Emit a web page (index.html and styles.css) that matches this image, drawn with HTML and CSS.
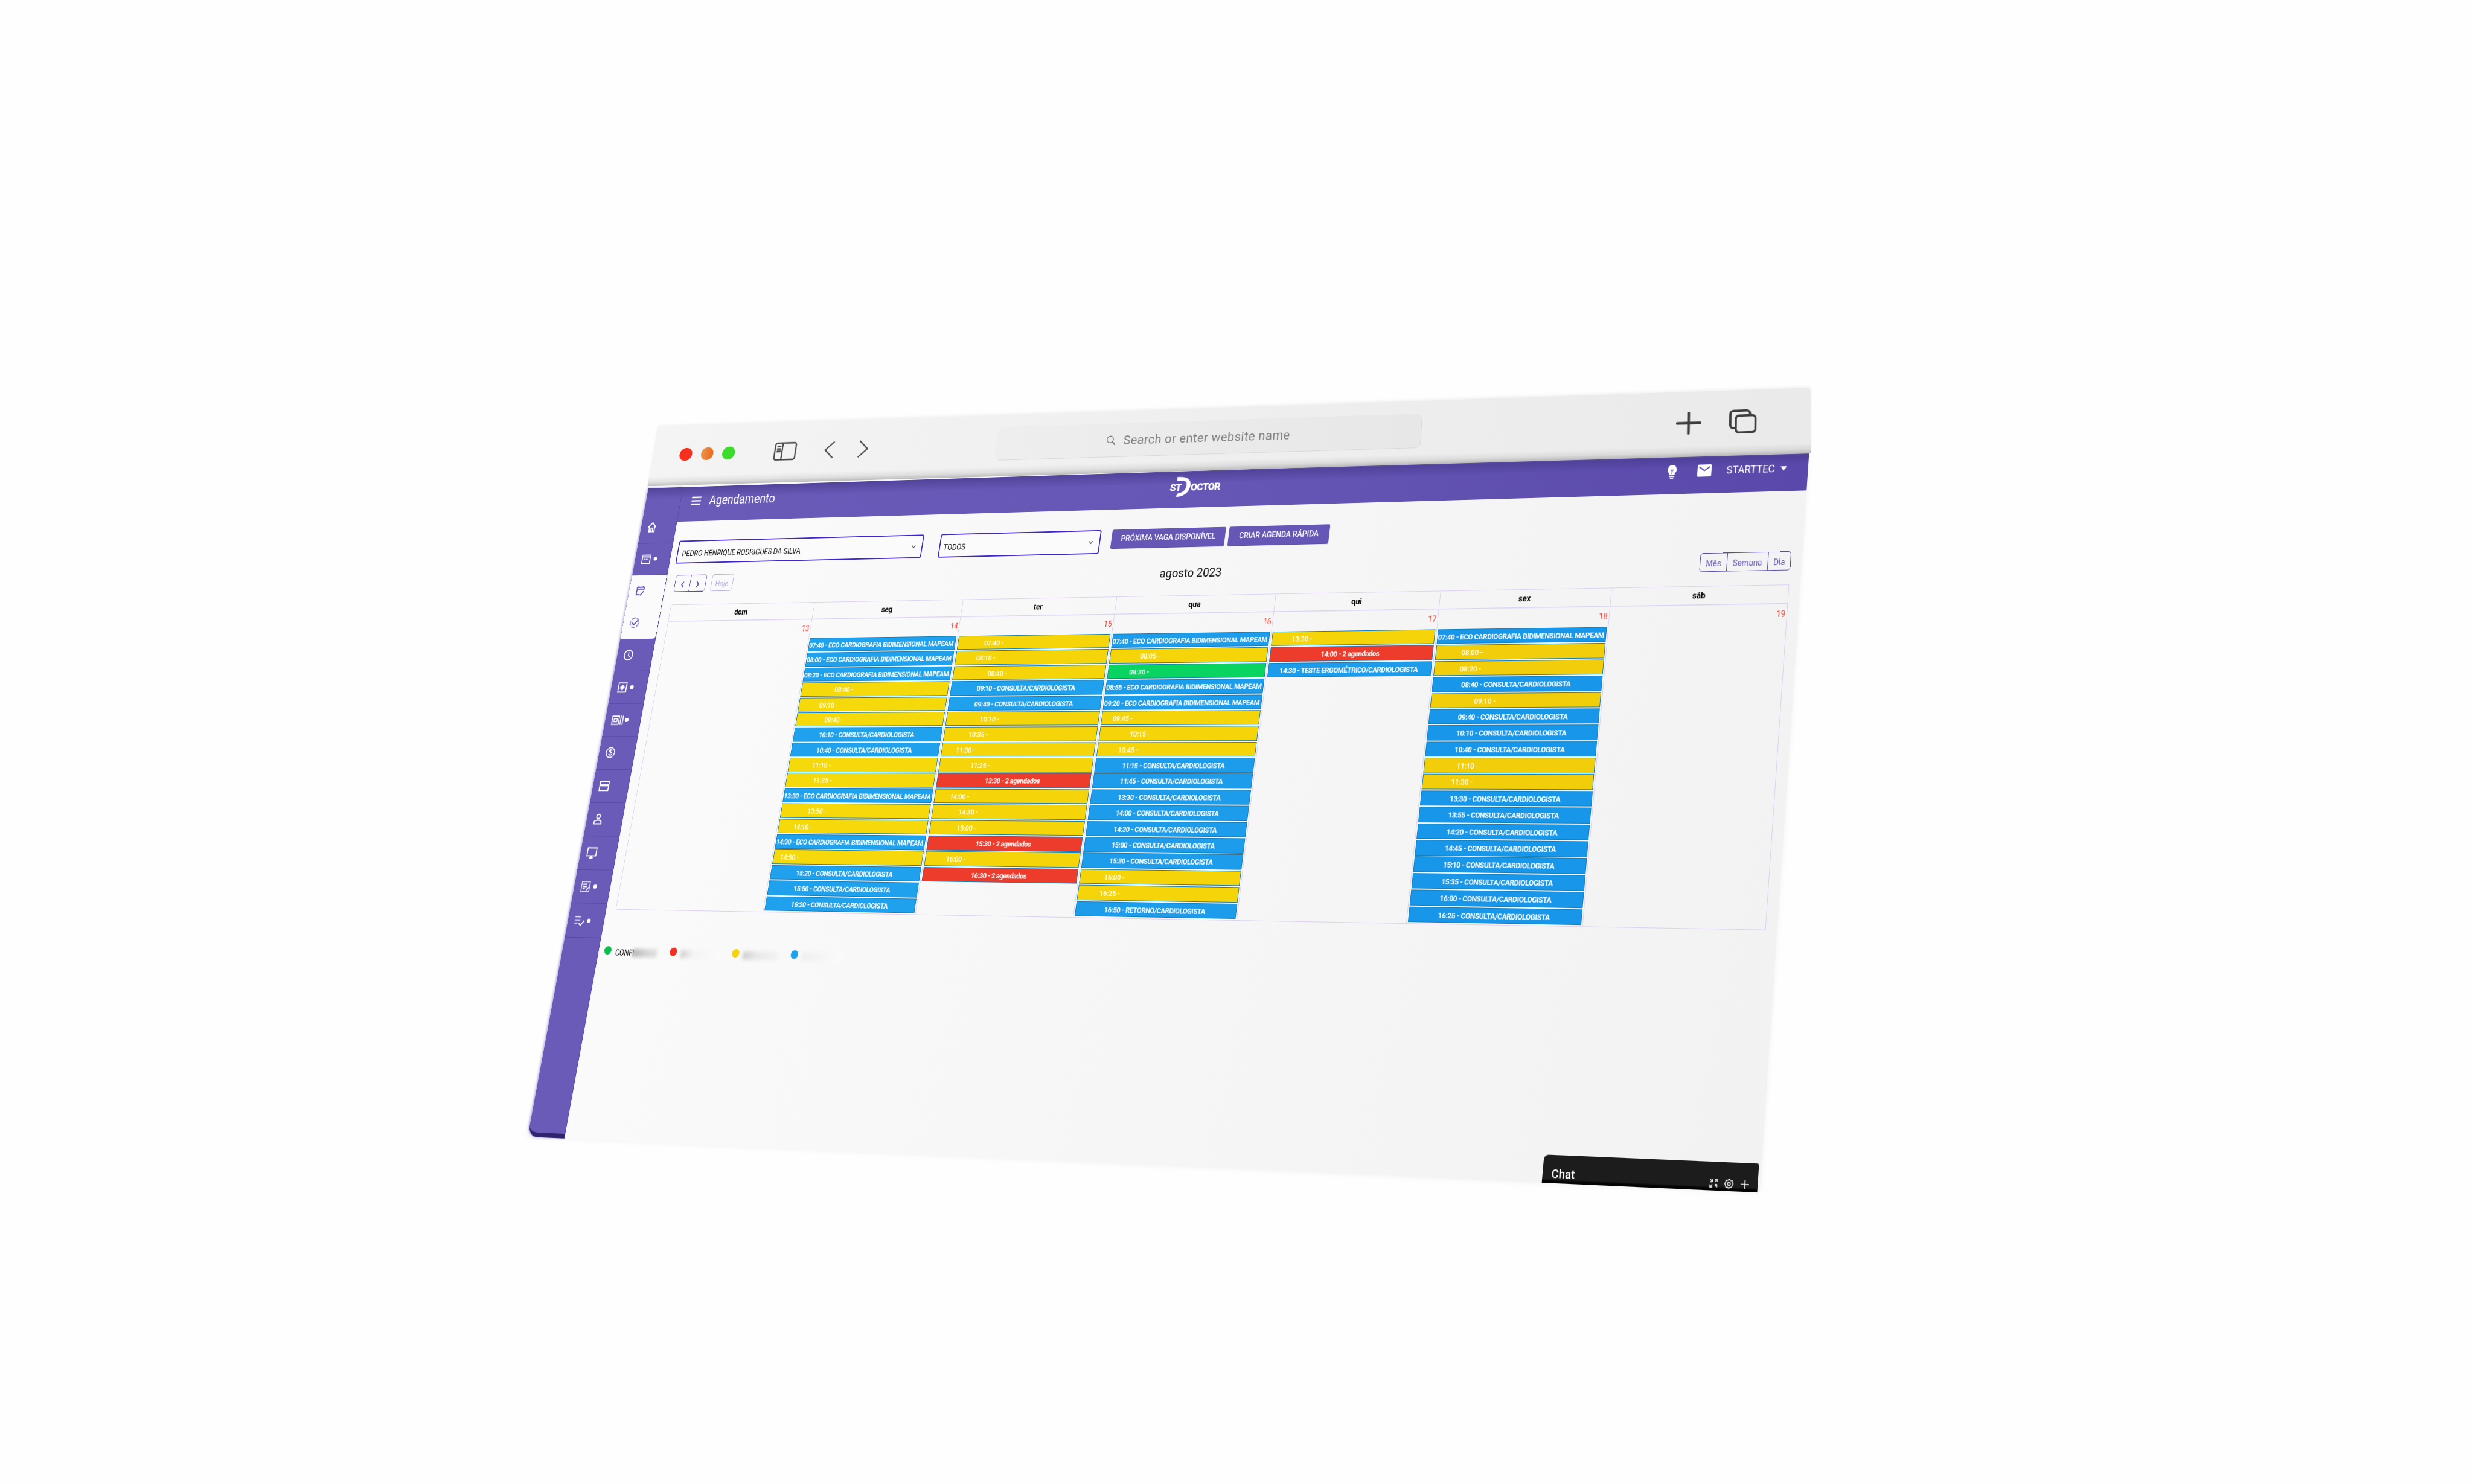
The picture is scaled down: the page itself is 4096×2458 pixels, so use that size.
FILE: index.html
```html
<!DOCTYPE html>
<html lang="pt-BR">
<head>
<meta charset="utf-8">
<title>Agendamento</title>
<link rel="stylesheet" href="styles.css">
</head>
<body>
<div class="stage">

<div class="app">
  <nav class="sidebar">
    <a class="item"><svg class="ic" viewBox="0 0 24 24"><path d="M3 12L12 3l9 9M6 10v11h4v-7h4v7h4V10" fill="none" stroke="#fff" stroke-width="2.4"/></svg></a>
    <a class="item dot"><svg class="ic" viewBox="0 0 24 24"><path d="M3 5h18v16H3z" fill="none" stroke="#fff" stroke-width="2.2"/><path d="M3 3h18v7H3z" fill="#b9b0e2"/><path d="M7 13h2m2 0h2m2 0h2" stroke="#fff" stroke-width="2"/></svg></a>
    <a class="item light"><svg class="ic" viewBox="0 0 24 24"><path d="M4 5h16v6M4 9h16M7 2v4M17 2v4M4 5v15h8M13 21l7-8" fill="none" stroke="#6b5bb9" stroke-width="2.4"/></svg></a>
    <a class="item light last"><svg class="ic" viewBox="0 0 24 24"><circle cx="12" cy="12" r="9.5" fill="none" stroke="#9388cf" stroke-width="2.6" stroke-dasharray="9 3"/><path d="M7 12l4 4 8-9" fill="none" stroke="#5b4bb0" stroke-width="2.6"/></svg></a>
    <a class="item"><svg class="ic" viewBox="0 0 24 24"><circle cx="12" cy="12" r="9.5" fill="none" stroke="#fff" stroke-width="2.2"/><path d="M12 6v7l4 3" fill="none" stroke="#fff" stroke-width="2"/></svg></a>
    <a class="item dot"><svg class="ic" viewBox="0 0 24 24"><path d="M3 3h18v18H3z" fill="none" stroke="#fff" stroke-width="2.2"/><path d="M12 7v10M7 12h10" stroke="#fff" stroke-width="4"/></svg></a>
    <a class="item dot"><svg class="ic wide" viewBox="0 0 28 24"><path d="M2 4h15v16H2zM21 3v18M26 3v18" fill="none" stroke="#fff" stroke-width="2.2"/><path d="M6 9h7v6H6z" fill="none" stroke="#fff" stroke-width="1.8"/></svg></a>
    <a class="item"><svg class="ic" viewBox="0 0 24 24"><circle cx="12" cy="12" r="9.5" fill="none" stroke="#fff" stroke-width="2"/><path d="M16 8c-2-2-7-2-7 1s7 2 7 5-5 4-8 1M12 5v14" fill="none" stroke="#fff" stroke-width="1.8"/></svg></a>
    <a class="item"><svg class="ic" viewBox="0 0 24 24"><path d="M2 4h20v17H2z" fill="none" stroke="#fff" stroke-width="2.2"/><path d="M2 9h20v4H2z" fill="#fff"/></svg></a>
    <a class="item"><svg class="ic" viewBox="0 0 24 24"><circle cx="12" cy="7" r="4" fill="none" stroke="#fff" stroke-width="2.2"/><path d="M4 21v-3c0-3 5-4 8-4s8 1 8 4v3z" fill="none" stroke="#fff" stroke-width="2.4"/></svg></a>
    <a class="item"><svg class="ic" viewBox="0 0 24 24"><path d="M2 3h20v15H2z" fill="none" stroke="#fff" stroke-width="2.2"/><path d="M8 21.5h8M12 18v4" stroke="#fff" stroke-width="3"/></svg></a>
    <a class="item dot"><svg class="ic" viewBox="0 0 24 24"><path d="M3 3h18v18H3z" fill="none" stroke="#ddd8f2" stroke-width="2"/><path d="M6 8h9M6 12h9M6 16h5M14 19l6-6" stroke="#fff" stroke-width="2.4"/></svg></a>
    <a class="item dot"><svg class="ic" viewBox="0 0 24 24"><path d="M2 5h12M2 11h12M2 17h7" stroke="#ddd8f2" stroke-width="2.4"/><path d="M12 17l4 4 7-9" fill="none" stroke="#fff" stroke-width="2.4"/></svg></a>
  </nav>

  <main class="main">
    <header class="header">
      <svg class="burger" viewBox="0 0 24 18"><path d="M1 2h22M1 9h22M1 16h22" stroke="#fff" stroke-width="2.8"/></svg>
      <h1 class="title">Agendamento</h1>
      <div class="logo"><span class="st">ST</span><svg class="arc" viewBox="0 0 38 42"><path d="M5 0C26-1 37 5 37 18C37 32 25 43 6 42L11 34C20 34 28 29 28 18C28 9 22 7 5 8z" fill="#fff"/></svg><span class="octor">OCTOR</span></div>
      <div class="user">
        <svg class="bulb" viewBox="0 0 18 24"><path d="M9 0a8.500 8.500 0 0 0-5 15v3h10v-3a8.500 8.500 0 0 0-5-15zM4.500 19.500h9v1.800h-9zM6 22.300h6V24H6z" fill="#fff"/><path d="M6.500 8L9 11l2.500-3M9 11v5" fill="none" stroke="#6252af" stroke-width="1.200"/></svg>
        <svg class="mail" viewBox="0 0 26 22"><rect width="26" height="22" rx="2" fill="#fff"/><path d="M3 4l10 7 10-7" fill="none" stroke="#5d4cac" stroke-width="2.200"/></svg>
        <span class="name">STARTTEC</span>
        <svg class="caret" viewBox="0 0 12 8"><path d="M0 0h12L6 8z" fill="#fff"/></svg>
      </div>
    </header>

    <div class="content">
      <div class="filters">
        <div class="select s1"><span>PEDRO HENRIQUE RODRIGUES DA SILVA</span><svg class="chev" viewBox="0 0 10 7"><path d="M1 1l4 4.500L9 1" fill="none" stroke="#555" stroke-width="1.600"/></svg></div>
        <div class="select s2"><span>TODOS</span><svg class="chev" viewBox="0 0 10 7"><path d="M1 1l4 4.500L9 1" fill="none" stroke="#555" stroke-width="1.600"/></svg></div>
        <div class="buttons"><button class="btn b1">PRÓXIMA VAGA DISPONÍVEL</button><button class="btn b2">CRIAR AGENDA RÁPIDA</button></div>
      </div>

      <div class="toolbar">
        <div class="left">
          <div class="group nav"><span><svg viewBox="0 0 8 14"><path d="M6.500 1L2 7l4.500 6" fill="none" stroke="#5b4bb0" stroke-width="2.400"/></svg></span><span><svg viewBox="0 0 8 14"><path d="M1.500 1L6 7l-4.500 6" fill="none" stroke="#5b4bb0" stroke-width="2.400"/></svg></span></div>
          <div class="group today"><span>Hoje</span></div>
        </div>
        <h2 class="month">agosto 2023</h2>
        <div class="group views"><span>Mês</span><span>Semana</span><span>Dia</span></div>
      </div>

      <div class="calendar">
        <section class="day"><h3>dom</h3><time>13</time></section>
        <section class="day"><h3>seg</h3><time>14</time>
          <p class="ev">07:40 - ECO CARDIOGRAFIA BIDIMENSIONAL MAPEAM</p>
          <p class="ev">08:00 - ECO CARDIOGRAFIA BIDIMENSIONAL MAPEAM</p>
          <p class="ev">08:20 - ECO CARDIOGRAFIA BIDIMENSIONAL MAPEAM</p>
          <p class="ev y" style="--x:70px">08:40 -</p>
          <p class="ev y" style="--x:43px">09:10 -</p>
          <p class="ev y" style="--x:59px">09:40 -</p>
          <p class="ev">10:10 - CONSULTA/CARDIOLOGISTA</p>
          <p class="ev">10:40 - CONSULTA/CARDIOLOGISTA</p>
          <p class="ev y" style="--x:49px">11:10 -</p>
          <p class="ev y" style="--x:56px">11:35 -</p>
          <p class="ev">13:30 - ECO CARDIOGRAFIA BIDIMENSIONAL MAPEAM</p>
          <p class="ev y" style="--x:55px">13:50 -</p>
          <p class="ev y" style="--x:31px">14:10 -</p>
          <p class="ev">14:30 - ECO CARDIOGRAFIA BIDIMENSIONAL MAPEAM</p>
          <p class="ev y" style="--x:14px">14:50 -</p>
          <p class="ev">15:20 - CONSULTA/CARDIOLOGISTA</p>
          <p class="ev">15:50 - CONSULTA/CARDIOLOGISTA</p>
          <p class="ev">16:20 - CONSULTA/CARDIOLOGISTA</p>
        </section>
        <section class="day"><h3>ter</h3><time>15</time>
          <p class="ev y" style="--x:54px">07:40 -</p>
          <p class="ev y" style="--x:42px">08:10 -</p>
          <p class="ev y" style="--x:70px">08:40 -</p>
          <p class="ev">09:10 - CONSULTA/CARDIOLOGISTA</p>
          <p class="ev">09:40 - CONSULTA/CARDIOLOGISTA</p>
          <p class="ev y" style="--x:68px">10:10 -</p>
          <p class="ev y" style="--x:50px">10:35 -</p>
          <p class="ev y" style="--x:29px">11:00 -</p>
          <p class="ev y" style="--x:63px">11:25 -</p>
          <p class="ev r">13:30 - 2 agendados</p>
          <p class="ev y" style="--x:31px">14:00 -</p>
          <p class="ev y" style="--x:53px">14:30 -</p>
          <p class="ev y" style="--x:54px">15:00 -</p>
          <p class="ev r">15:30 - 2 agendados</p>
          <p class="ev y" style="--x:42px">16:00 -</p>
          <p class="ev r">16:30 - 2 agendados</p>
        </section>
        <section class="day"><h3>qua</h3><time>16</time>
          <p class="ev">07:40 - ECO CARDIOGRAFIA BIDIMENSIONAL MAPEAM</p>
          <p class="ev y" style="--x:59px">08:05 -</p>
          <p class="ev g" style="--x:42px">08:30 -</p>
          <p class="ev">08:55 - ECO CARDIOGRAFIA BIDIMENSIONAL MAPEAM</p>
          <p class="ev">09:20 - ECO CARDIOGRAFIA BIDIMENSIONAL MAPEAM</p>
          <p class="ev y" style="--x:22px">09:45 -</p>
          <p class="ev y" style="--x:59px">10:15 -</p>
          <p class="ev y" style="--x:41px">10:45 -</p>
          <p class="ev">11:15 - CONSULTA/CARDIOLOGISTA</p>
          <p class="ev">11:45 - CONSULTA/CARDIOLOGISTA</p>
          <p class="ev">13:30 - CONSULTA/CARDIOLOGISTA</p>
          <p class="ev">14:00 - CONSULTA/CARDIOLOGISTA</p>
          <p class="ev">14:30 - CONSULTA/CARDIOLOGISTA</p>
          <p class="ev">15:00 - CONSULTA/CARDIOLOGISTA</p>
          <p class="ev">15:30 - CONSULTA/CARDIOLOGISTA</p>
          <p class="ev y" style="--x:47px">16:00 -</p>
          <p class="ev y" style="--x:42px">16:25 -</p>
          <p class="ev">16:50 - RETORNO/CARDIOLOGISTA</p>
        </section>
        <section class="day"><h3>qui</h3><time>17</time>
          <p class="ev y" style="--x:38px">13:30 -</p>
          <p class="ev r">14:00 - 2 agendados</p>
          <p class="ev">14:30 - TESTE ERGOMÉTRICO/CARDIOLOGISTA</p>
        </section>
        <section class="day"><h3>sex</h3><time>18</time>
          <p class="ev">07:40 - ECO CARDIOGRAFIA BIDIMENSIONAL MAPEAM</p>
          <p class="ev y" style="--x:47px">08:00 -</p>
          <p class="ev y" style="--x:47px">08:20 -</p>
          <p class="ev">08:40 - CONSULTA/CARDIOLOGISTA</p>
          <p class="ev y" style="--x:79px">09:10 -</p>
          <p class="ev">09:40 - CONSULTA/CARDIOLOGISTA</p>
          <p class="ev">10:10 - CONSULTA/CARDIOLOGISTA</p>
          <p class="ev">10:40 - CONSULTA/CARDIOLOGISTA</p>
          <p class="ev y" style="--x:59px">11:10 -</p>
          <p class="ev y" style="--x:52px">11:30 -</p>
          <p class="ev">13:30 - CONSULTA/CARDIOLOGISTA</p>
          <p class="ev">13:55 - CONSULTA/CARDIOLOGISTA</p>
          <p class="ev">14:20 - CONSULTA/CARDIOLOGISTA</p>
          <p class="ev">14:45 - CONSULTA/CARDIOLOGISTA</p>
          <p class="ev">15:10 - CONSULTA/CARDIOLOGISTA</p>
          <p class="ev">15:35 - CONSULTA/CARDIOLOGISTA</p>
          <p class="ev">16:00 - CONSULTA/CARDIOLOGISTA</p>
          <p class="ev">16:25 - CONSULTA/CARDIOLOGISTA</p>
        </section>
        <section class="day"><h3>sáb</h3><time>19</time></section>
      </div>

      <div class="legend">
        <div class="key k1"><i></i><span>CONFI</span><b class="smudge"></b></div>
        <div class="key k2"><i></i><b class="smudge"></b></div>
        <div class="key k3"><i></i><b class="smudge"></b></div>
        <div class="key k4"><i></i><b class="smudge"></b></div>
      </div>
    </div>
  </main>

  <aside class="chat">
    <span class="label">Chat</span>
    <svg class="ci" viewBox="0 0 24 24"><path d="M3 3l6 6M21 3l-6 6M3 21l6-6M21 21l-6-6M9 3v6M3 9h4M15 4h6v5M3 15v6h6M15 15h5v5" fill="none" stroke="#fff" stroke-width="2"/></svg>
    <svg class="ci" viewBox="0 0 24 24"><path d="M12 2l3 2 4 0 1 4 2 4-2 4-1 4-4 0-3 2-3-2-4 0-1-4-2-4 2-4 1-4 4 0z" fill="none" stroke="#fff" stroke-width="2.200"/><circle cx="12" cy="12" r="3.500" fill="none" stroke="#fff" stroke-width="2.200"/></svg>
    <svg class="ci" viewBox="0 0 24 24"><path d="M12 2v20M2 12h20" stroke="#fff" stroke-width="2.600"/></svg>
  </aside>
</div>

<div class="chrome">
  <div class="lights"><i class="red"></i><i class="orange"></i><i class="green"></i></div>
  <svg class="panel" viewBox="0 0 50 38"><rect x="2" y="2" width="46" height="34" rx="4" fill="none" stroke="#4a4a4a" stroke-width="3"/><path d="M18 2v34" stroke="#4a4a4a" stroke-width="3"/><path d="M6 9h9M6 14h9M6 19h9" stroke="#4a4a4a" stroke-width="3.400"/></svg>
  <svg class="back" viewBox="0 0 24 36"><path d="M21 1L2 18l19 17" fill="none" stroke="#4f4f4f" stroke-width="3"/></svg>
  <svg class="fwd" viewBox="0 0 24 36"><path d="M3 1l19 17L3 35" fill="none" stroke="#4f4f4f" stroke-width="3"/></svg>
  <div class="search"><svg class="lens" viewBox="0 0 20 20"><circle cx="8" cy="8" r="6.800" fill="none" stroke="#777" stroke-width="1.600"/><path d="M13 13l6 6" stroke="#777" stroke-width="2.600"/></svg><span>Search or enter website name</span></div>
  <svg class="plus" viewBox="0 0 46 42"><path d="M23 2v38M2 21h42" stroke="#3d3d3d" stroke-width="5" stroke-linecap="round"/></svg>
  <svg class="tabs" viewBox="0 0 50 44"><path d="M12 34H8a6 6 0 0 1-6-6V8a6 6 0 0 1 6-6h24a6 6 0 0 1 6 6v2" fill="none" stroke="#3d3d3d" stroke-width="4"/><rect x="12" y="11" width="36" height="31" rx="6" fill="none" stroke="#3d3d3d" stroke-width="4"/></svg>
</div>

</div>
</body>
</html>
```

FILE: styles.css
```css
* { box-sizing: border-box; margin: 0; padding: 0; }
body { background: #fff; font-family: Roboto, "Liberation Sans", sans-serif; }
.stage { position: relative; width: 4096px; height: 2458px; overflow: hidden; background: #fefefe; }
svg { display: block; flex: none; }

/* The two tilted planes: page and browser bar */
.app {
  position: absolute; left: 0; top: 0;
  width: 2288px; height: 1187px;
  display: flex;
  transform-origin: 0 0;
  transform: matrix3d(0.68299, -0.065883, 0, -0.0000524904, -0.214734, 0.805666, 0, -0.0000527937, 0, 0, 1, 0, 1074.0276, 808.6668, 0, 1);
  background: linear-gradient(100deg, #fbfbfb, #f7f7f7 45%, #f2f2f2);
  box-shadow: 0 0 8px rgba(240, 240, 244, .9);
}
.chrome {
  position: absolute; left: 0; top: 0;
  width: 2335px; height: 120px;
  display: flex; align-items: center;
  padding: 0 99px 4px 60px;
  transform-origin: 0 0;
  transform: matrix3d(0.686451, -0.0559408, 0, -0.0000438541, -0.22332, 0.759153, 0, -0.0000745667, 0, 0, 1, 0, 1089.536, 706.97, 0, 1);
  border-radius: 6px 6px 0 0;
  background: linear-gradient(transparent 84%, rgba(0, 0, 0, .07) 93%, rgba(0, 0, 0, .22)), linear-gradient(90deg, #f4f4f4, #eaeaea);
  box-shadow: 0 -3px 5px #f2f2f2;
}

/* Sidebar */
.sidebar {
  width: 78px; flex: none; padding-top: 46.800px;
  background: linear-gradient(#3c2f7e88, transparent 23px), #6b5bb9;
  border-right: 1px solid #5546a3;
  border-bottom: 8px solid #30246f;
  border-bottom-left-radius: 20px;
  box-shadow: -2px 0 4px rgba(107, 91, 185, .5);
}
.item { position: relative; display: flex; align-items: center; height: 60.900px; padding-left: 12px; border-bottom: 1.500px solid #5a4ba6; }
.item.dot::after { content: ""; width: 7.500px; height: 7.500px; margin-left: 4px; border-radius: 50%; background: #fff; }
.item.light { background: #fbfbfb; border-bottom-color: transparent; border-top-right-radius: 4px; }
.item.light.last { border-radius: 0 0 6px 0; }
.ic { width: 25px; height: 23px; }
.ic.wide { width: 30px; margin-right: -3px; }

/* Header */
.main { flex: 1; min-width: 0; display: flex; flex-direction: column; }
.header {
  height: 67.400px; display: flex; align-items: center; padding: 0 37px 12px 22px;
  background: linear-gradient(#3c2f7e88, transparent 34%), linear-gradient(90deg, #6b5bb9, #6656b5 50%, #5a49aa);
  color: #fff;
}
.burger { width: 24px; height: 17px; }
.title { margin-left: 17px; font-size: 23px; font-weight: 400; width: 146px; line-height: 30px; }
.logo { display: flex; align-items: center; margin-left: 818px; height: 42px; width: 103px; padding-top: 2px; font-weight: 900; }
.st { font-size: 19px; letter-spacing: -.8px; padding-top: 2px; width: 22px; }
.arc { width: 33px; height: 41px; margin: 0 0 0 -14px; }
.octor { font-size: 19px; letter-spacing: -.9px; margin-left: 0; padding-top: 1px; }
.user { display: flex; align-items: center; margin-left: auto; }
.bulb { width: 18px; height: 24px; }
.mail { width: 25px; height: 21px; margin-left: 36px; }
.name { font-size: 18px; letter-spacing: -.2px; margin-left: 26px; line-height: 24px; }
.caret { width: 11px; height: 8px; margin-left: 10px; }

/* Filters */
.content { flex: 1; padding: 36.600px 16px 0 13px; }
.filters { display: flex; align-items: flex-start; height: 44.400px; }
.select {
  height: 44.400px; border: 2px solid #4124cf; border-radius: 4px; background: #fbfbfb;
  display: flex; align-items: center; justify-content: space-between;
  padding: 5px 12px 0 9px; font-size: 14.200px; color: #111;
}
.s1 { width: 526px; }
.s2 { width: 328px; margin-left: 35px; padding-left: 7px; }
.chev { width: 9px; height: 7px; margin-bottom: 4px; }
.buttons { display: flex; gap: 7px; margin-left: 22px; }
.btn { height: 34px; border: 0; border-radius: 3px; background: #6656b5; color: #fff; font: 500 14.400px Roboto, sans-serif; letter-spacing: -.1px; box-shadow: 0 1px 1px #4b3d9a; }
.b1 { width: 224px; }
.b2 { width: 194px; }

/* Calendar toolbar */
.toolbar { display: flex; align-items: center; justify-content: space-between; height: 31.500px; margin: 21.900px 0 24.200px 7px; width: 2171px; }
.left { display: flex; gap: 12px; }
.group { display: flex; height: 31.500px; border: 1.500px solid #5b4bb0; border-radius: 5px; color: #6454b4; font-size: 14px; }
.group span { display: flex; align-items: center; justify-content: center; padding-top: 4px; }
.group span + span { border-left: 1.500px solid #5b4bb0; }
.nav { width: 67.500px; }
.nav span { flex: 1; }
.nav svg { width: 7px; height: 13px; }
.today { width: 47px; border-color: #b9b0e4; color: #b9b0e4; }
.today span { flex: 1; }
.views span { width: 46px; }
.views span:nth-child(2) { width: 71px; }
.views span:nth-child(3) { width: 39px; }
.month { font-size: 21.700px; font-weight: 400; line-height: 30px; color: #111; }

/* Calendar grid */
.calendar {
  display: grid; grid-template-columns: repeat(7, 310px); width: 2171px; height: 561px; margin-left: 7px;
  border: solid #dcd0f6; border-width: 1px 1px 1.500px 0;
  background: linear-gradient(#dcd0f6, #dcd0f6) 0 30.400px / 100% 1.500px no-repeat;
}
.day { border-left: 1px solid #dcd0f6; padding: 0 2px 0 2px; min-width: 0; }
.day h3 { height: 31.400px; line-height: 32px; font-size: 14.400px; letter-spacing: -.2px; font-weight: 700; text-align: center; color: #000; }
.day time { display: block; height: 34.600px; line-height: 35px; font-size: 14px; text-align: right; color: #f4392b; }
.ev {
  height: 25.500px; margin-bottom: 1.900px; padding-right: 3px; line-height: 25.500px; overflow: hidden; white-space: nowrap;
  font-size: 12.800px; letter-spacing: -.46px; font-weight: 700; text-align: center; color: #fff;
  background: #20a1ed; border: 1px solid #0f7fbd;
}
.ev.y { background: #f6d80b; font-weight: 500; }
.ev.g { background: #09d462; font-weight: 500; }
.ev.y, .ev.g { text-align: left; padding-left: calc(var(--x) - 1px); letter-spacing: -.2px; }
.ev.r { background: #ef3e2f; }
.day:nth-child(n+4) .ev { background-color: #1d9ceb; }
.day:nth-child(6) .ev { background-color: #1896e9; }
.day:nth-child(n) .ev.y { background-color: #f5d40a; }
.day:nth-child(2) .ev.y { background-color: #f6d90b; }
.day:nth-child(6) .ev.y { background-color: #f2cd09; }
.day:nth-child(n) .ev.g { background-color: #09d462; }
.day:nth-child(n) .ev.r { background-color: #ee3c2c; }

/* Legend */
.legend { display: flex; height: 24px; margin: 61px 0 0 -1px; align-items: center; font-size: 14px; color: #111; }
.key { display: flex; align-items: center; }
.key i { width: 15px; height: 15px; border-radius: 50%; background: #0bbf4c; }
.key span { margin-left: 9px; padding-top: 6px; }
.k1 { width: 139px; }
.k2 { width: 130px; }
.k3 { width: 121px; }
.k2 i { background: #f22f22; }
.k3 i { background: #f5d20b; }
.k4 i { background: #22a0ea; }
.smudge { width: 84px; height: 14px; margin: 6px 0 0 8px; filter: blur(3px); background: linear-gradient(90deg, #cfcfcf, #f3f3f3 30%, #fbfbfb); }
.k1 .smudge { width: 52px; margin-left: -3px; background: linear-gradient(90deg, #b4b4b4, #d2d2d2 50%, #e0e0e0); }
.k3 .smudge { width: 72px; background: linear-gradient(90deg, #cecece, #e8e8e8 40%, #f2f2f2); }
.k4 .smudge { background: linear-gradient(90deg, #eeeeee, #fcfcfc); }

/* Chat dock */
.chat {
  position: absolute; right: 4px; bottom: 0; width: 357px; height: 43px;
  display: flex; align-items: center; padding: 20px 13px 0 15px; gap: 9px;
  background: linear-gradient(#1c1c1c 85%, #040404 92%); border-radius: 8px 3px 0 0; color: #fff;
}
.label { font-size: 19px; font-weight: 500; margin-right: auto; line-height: 18px; padding-bottom: 5px; }
.ci { width: 16.500px; height: 16px; }

/* Browser bar */
.lights { display: flex; gap: 20px; }
.lights i { width: 27.500px; height: 25.500px; border-radius: 50%; }
.red { background: #f5301f; }
.orange { background: linear-gradient(90deg, #e9944f, #ea6a1e); }
.green { background: #3ddc2c; }
.panel { width: 49px; height: 38px; margin-left: 86px; }
.back { width: 23px; height: 36px; margin-left: 61px; }
.fwd { width: 23px; height: 36px; margin-left: 49px; }
.search {
  display: flex; align-items: center; width: 858px; height: 64px; margin-left: 272px; padding-left: 229px; margin-top: -4px;
  border-radius: 12px; background: linear-gradient(90deg, #eeeeee, #e7e7e7);
  box-shadow: 1px 1px 1px #d6d6d6;
  font-size: 24.300px; letter-spacing: .550px; color: #808080;
}
.lens { width: 20px; height: 19px; margin-right: 16px; }
.plus { width: 46px; height: 42px; margin-left: auto; }
.tabs { width: 50px; height: 44px; margin-left: 52px; }
```
